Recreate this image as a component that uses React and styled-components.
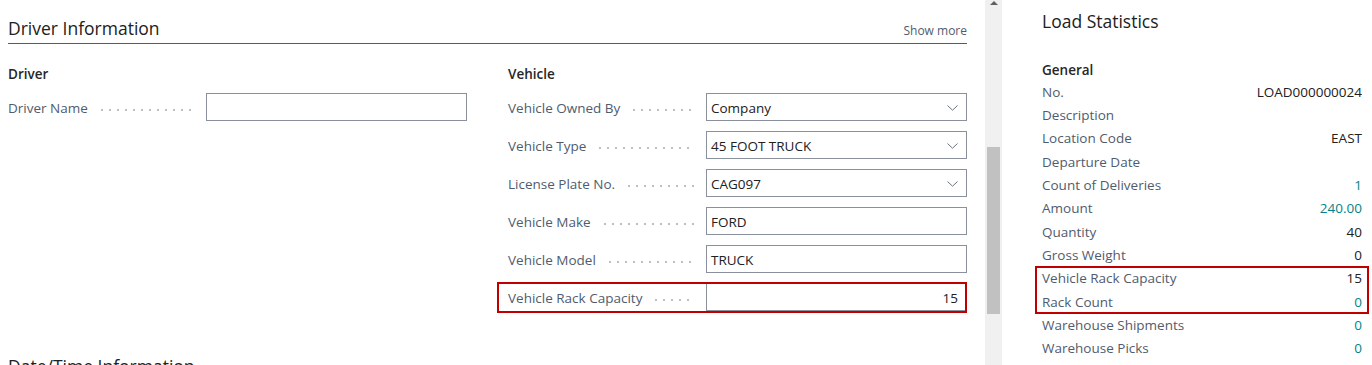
import React from "react";
import styled, { createGlobalStyle } from "styled-components";

const GlobalStyle = createGlobalStyle`
  html, body {
    margin: 0;
    padding: 0;
    background: #fff;
    overflow: hidden;
  }
  body {
    font-family: "Open Sans", "Segoe UI", sans-serif;
    font-size: 13.5px;
    color: #212121;
  }
`;

const driverFields = [{ label: "Driver Name", value: "" }];

const vehicleFields = [
  { label: "Vehicle Owned By", value: "Company", lookup: true },
  { label: "Vehicle Type", value: "45 FOOT TRUCK", lookup: true },
  { label: "License Plate No.", value: "CAG097", lookup: true },
  { label: "Vehicle Make", value: "FORD" },
  { label: "Vehicle Model", value: "TRUCK" },
  { label: "Vehicle Rack Capacity", value: "15", numeric: true, marked: true },
];

const statRows = [
  { label: "No.", value: "LOAD000000024" },
  { label: "Description", value: "" },
  { label: "Location Code", value: "EAST" },
  { label: "Departure Date", value: "" },
  { label: "Count of Deliveries", value: "1", link: true },
  { label: "Amount", value: "240.00", link: true },
  { label: "Quantity", value: "40" },
  { label: "Gross Weight", value: "0" },
];

const markedRows = [
  { label: "Vehicle Rack Capacity", value: "15" },
  { label: "Rack Count", value: "0", link: true },
];

const tailRows = [
  { label: "Warehouse Shipments", value: "0", link: true },
  { label: "Warehouse Picks", value: "0", link: true },
];

const Chevron = () => (
  <svg width="11" height="6" viewBox="0 0 11 6" fill="none">
    <path d="M0.5 0.5L5.5 5.2L10.5 0.5" stroke="#6b7480" strokeWidth="1" />
  </svg>
);

const FieldRow = ({ field }) => (
  <Field $marked={field.marked}>
    <Caption>
      <CaptionText>{field.label}</CaptionText>
      <Leader />
    </Caption>
    <InputBox $numeric={field.numeric}>
      <InputValue>{field.value}</InputValue>
      {field.lookup && <Chevron />}
    </InputBox>
  </Field>
);

const StatRow = ({ row }) => (
  <Stat>
    <StatLabel>{row.label}</StatLabel>
    <StatValue $link={row.link}>{row.value}</StatValue>
  </Stat>
);

const App = () => {
  return (
    <>
      <GlobalStyle />
      <Page>
        <MainPane>
          <Section>
            <SectionHeader>
              <SectionTitle>Driver Information</SectionTitle>
              <ShowMore>Show more</ShowMore>
            </SectionHeader>
            <Columns>
              <Group>
                <GroupTitle>Driver</GroupTitle>
                {driverFields.map((f) => (
                  <FieldRow key={f.label} field={f} />
                ))}
              </Group>
              <Group>
                <GroupTitle>Vehicle</GroupTitle>
                {vehicleFields.map((f) => (
                  <FieldRow key={f.label} field={f} />
                ))}
              </Group>
            </Columns>
          </Section>
          <Section>
            <SectionHeader>
              <SectionTitle>Date/Time Information</SectionTitle>
            </SectionHeader>
          </Section>
        </MainPane>

        <Scrollbar>
          <ScrollArrow />
          <ScrollThumb />
        </Scrollbar>

        <FactBox>
          <FactTitle>Load Statistics</FactTitle>
          <FactGroup>General</FactGroup>
          {statRows.map((r) => (
            <StatRow key={r.label} row={r} />
          ))}
          <Marked>
            {markedRows.map((r) => (
              <StatRow key={r.label} row={r} />
            ))}
          </Marked>
          {tailRows.map((r) => (
            <StatRow key={r.label} row={r} />
          ))}
        </FactBox>
      </Page>
    </>
  );
};

const Page = styled.div`
  display: flex;
  height: 365px;
  overflow: hidden;
`;

const MainPane = styled.div`
  flex: 0 0 985px;
  box-sizing: border-box;
  padding: 0 18px 0 8px;
`;

const Section = styled.section`
  margin-bottom: 17px;
`;

const SectionHeader = styled.div`
  display: flex;
  align-items: flex-end;
  justify-content: space-between;
  padding-top: 16px;
  padding-bottom: 3px;
  border-bottom: 1px solid #505c6d;
`;

const SectionTitle = styled.h2`
  margin: 0;
  font-size: 17.5px;
  font-weight: 400;
  line-height: 24px;
  color: #212121;
`;

const ShowMore = styled.span`
  font-size: 12px;
  line-height: 18px;
  color: #505c6d;
`;

const Columns = styled.div`
  display: grid;
  grid-template-columns: 1fr 1fr;
  column-gap: 41px;
`;

const Group = styled.div`
  display: flex;
  flex-direction: column;
`;

const GroupTitle = styled.div`
  margin-top: 20px;
  margin-bottom: 9px;
  font-size: 13.5px;
  font-weight: 600;
  line-height: 20px;
  color: #262626;
`;

const Field = styled.div`
  position: relative;
  display: flex;
  align-items: center;
  height: 28px;
  margin-bottom: 10px;

  ${(p) =>
    p.$marked &&
    `
    &::after {
      content: "";
      position: absolute;
      top: -1px;
      bottom: -2px;
      left: -11px;
      right: 0;
      border: 2px solid #c00000;
      pointer-events: none;
    }
  `}
`;

const Caption = styled.div`
  flex: 0 0 198px;
  display: flex;
  align-items: center;
  min-width: 0;
  padding-top: 1px;
`;

const CaptionText = styled.span`
  white-space: nowrap;
  color: #505c6d;
`;

const Leader = styled.span`
  flex: 1;
  height: 2px;
  margin: 4px 12px 0 10px;
  background-image: radial-gradient(circle, #b8bec6 0.7px, transparent 1px);
  background-size: 8px 2px;
  background-repeat: repeat-x;
`;

const InputBox = styled.div`
  flex: 1;
  display: flex;
  align-items: center;
  justify-content: ${(p) => (p.$numeric ? "flex-end" : "space-between")};
  height: 28px;
  box-sizing: border-box;
  padding: 1px 8px 0 4px;
  border: 1px solid #8a919c;
  background: #fff;
`;

const InputValue = styled.span`
  color: #212121;
  white-space: nowrap;
`;

const Scrollbar = styled.div`
  flex: 0 0 17px;
  display: flex;
  flex-direction: column;
  align-items: center;
  background: #f0f0f0;
`;

const ScrollArrow = styled.div`
  width: 0;
  height: 0;
  margin-top: 1px;
  border-left: 4px solid transparent;
  border-right: 4px solid transparent;
  border-bottom: 4px solid #606060;
`;

const ScrollThumb = styled.div`
  width: 13px;
  height: 167px;
  margin-top: 142px;
  background: #c1c1c1;
`;

const FactBox = styled.aside`
  flex: 1;
  box-sizing: border-box;
  padding: 9px 10px 0 40px;
`;

const FactTitle = styled.h3`
  margin: 0 0 27px 0;
  font-size: 17.5px;
  font-weight: 400;
  line-height: 24px;
  color: #212121;
`;

const FactGroup = styled.div`
  font-size: 13.5px;
  font-weight: 600;
  line-height: 20px;
  color: #262626;
`;

const Stat = styled.div`
  display: flex;
  justify-content: space-between;
  align-items: center;
  height: 23.33px;
`;

const StatLabel = styled.span`
  color: #505c6d;
  white-space: nowrap;
`;

const StatValue = styled.span`
  color: ${(p) => (p.$link ? "#00858a" : "#212121")};
  white-space: nowrap;
`;

const Marked = styled.div`
  position: relative;

  &::after {
    content: "";
    position: absolute;
    top: -1px;
    bottom: -1px;
    left: -7px;
    right: -7px;
    border: 2px solid #c00000;
    pointer-events: none;
  }
`;

export default App;
